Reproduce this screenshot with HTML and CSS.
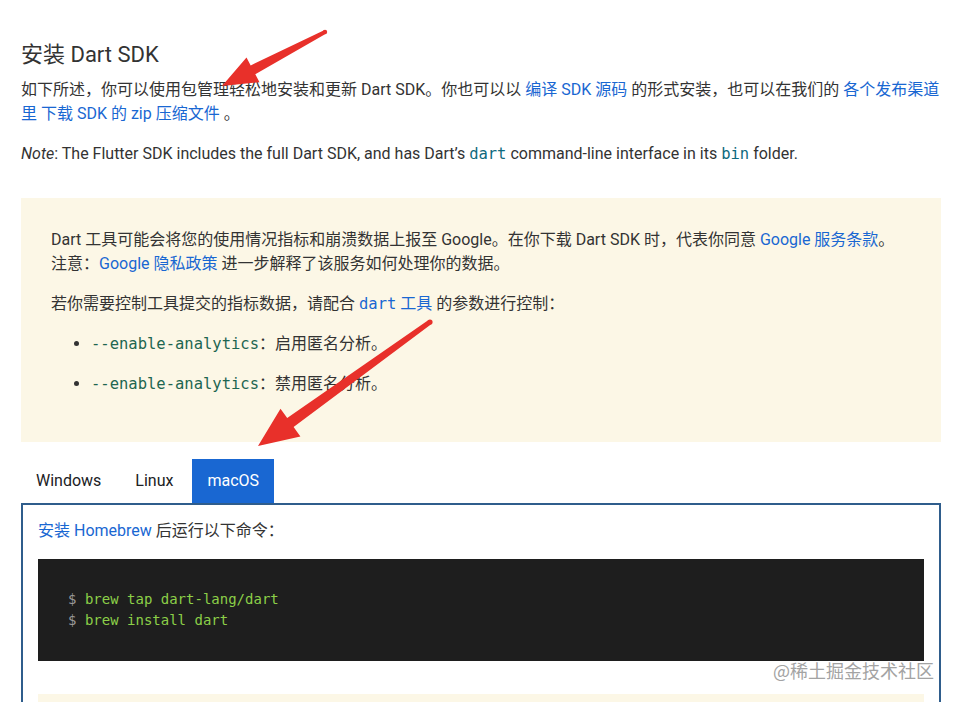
FILE: index.html
```html
<!DOCTYPE html>
<html lang="zh-CN">
<head>
<meta charset="utf-8">
<title>安装 Dart SDK</title>
<link rel="stylesheet" href="styles.css">
</head>
<body>
<main class="page">
  <h2 class="title">安装 Dart SDK</h2>
  <p class="para">如下所述，你可以使用包管理轻松地安装和更新 Dart SDK。你也可以以 <a href="#">编译 SDK 源码</a> 的形式安装，也可以在我们的 <a href="#">各个发布渠道里 下载 SDK 的 zip 压缩文件</a> 。</p>
  <p class="para"><em>Note</em>: The Flutter SDK includes the full Dart SDK, and has Dart’s <code class="inline">dart</code> command-line interface in its <code class="inline">bin</code> folder.</p>

  <aside class="notice">
    <p class="para">Dart 工具可能会将您的使用情况指标和崩溃数据上报至 Google。在你下载 Dart SDK 时，代表你同意 <a href="#">Google 服务条款</a>。<br>注意：<a href="#">Google 隐私政策</a> 进一步解释了该服务如何处理你的数据。</p>
    <p class="para">若你需要控制工具提交的指标数据，请配合 <a href="#"><code class="inline link-code">dart</code> 工具</a> 的参数进行控制：</p>
    <ul class="list">
      <li><code class="inline green">--enable-analytics</code>：启用匿名分析。</li>
      <li><code class="inline green">--enable-analytics</code>：禁用匿名分析。</li>
    </ul>
  </aside>

  <div class="tabs">
    <span class="tab">Windows</span>
    <span class="tab">Linux</span>
    <span class="tab active">macOS</span>
  </div>
  <section class="panel">
    <p class="para"><a href="#">安装 Homebrew</a> 后运行以下命令：</p>
    <pre class="code"><span class="prompt">$</span> <span class="cmd">brew tap dart-lang/dart</span>
<span class="prompt">$</span> <span class="cmd">brew install dart</span></pre>
    <div class="notice-small"></div>
  </section>
</main>

<svg class="arrows" width="953" height="702" viewBox="0 0 953 702" aria-hidden="true">
  <polygon fill="#e8302a" points="324.1,30.2 250.7,65.4 246.5,57.4 222,86 259.5,82.2 255.3,74.2 325.9,33.8"/>
  <circle cx="325" cy="32" r="2.2" fill="#e8302a"/>
  <polygon fill="#e8302a" points="428.5,320 287.2,418.1 280.5,408.8 258,446 300.4,436.4 293.6,427.1 431.5,324"/>
  <circle cx="430" cy="322" r="2.6" fill="#e8302a"/>
</svg>
<div class="watermark">@稀土掘金技术社区</div>
</body>
</html>
```

FILE: styles.css
```css
html, body {
  margin: 0;
  padding: 0;
  background: #ffffff;
  overflow: hidden;
}
body {
  width: 953px;
  height: 702px;
  position: relative;
  font-family: Roboto, "Noto Sans CJK SC", sans-serif;
  font-size: 16px;
  line-height: 24px;
  color: #333333;
}
.page {
  box-sizing: border-box;
  height: 702px;
  overflow: hidden;
  padding: 40px 12px 0 21px;
}
.title {
  margin: 0 0 8px;
  font-size: 22px;
  line-height: 30px;
  font-weight: 400;
  color: #333333;
}
.para {
  margin: 0 0 16px;
}
a {
  color: #1967d2;
  text-decoration: none;
}
em {
  font-style: italic;
}
.inline {
  font-family: "DejaVu Sans Mono", monospace;
  font-size: 15.5px;
  color: #0f6a7e;
}
.link-code {
  color: #1967d2;
}
.green {
  color: #1e6651;
}
.notice {
  margin-top: 32px;
  background: #fcf7e6;
  padding: 30px 30px 30px;
}
.list {
  margin: 0;
  padding: 0 0 0 40px;
}
.list li {
  margin-bottom: 16px;
}
.tabs {
  margin-top: 17px;
  display: flex;
  gap: 4px;
  height: 44px;
}
.tab {
  padding: 0 15px;
  line-height: 44px;
  color: #202124;
}
.tab.active {
  background: #1967d2;
  color: #ffffff;
}
.panel {
  border: 2px solid #2f5d8c;
  border-bottom: 0;
  padding: 14px 15px 0;
  height: 190px;
}
.code {
  margin: 0 0 33px;
  padding: 30px 30px;
  background: #1e1e1e;
  font-family: "DejaVu Sans Mono", monospace;
  font-size: 14px;
  line-height: 21px;
  color: #9a9a9a;
}
.prompt {
  color: #9a9a9a;
}
.cmd {
  color: #8ccf48;
}
.notice-small {
  background: #fcf7e6;
  height: 8px;
}
.arrows {
  position: absolute;
  left: 0;
  top: 0;
  pointer-events: none;
}
.watermark {
  position: absolute;
  left: 773px;
  top: 657px;
  font-size: 18px;
  line-height: 26px;
  color: #a3a3a3;
  font-family: "Noto Sans CJK SC", sans-serif;
  text-shadow: 0 0 2px #ffffff;
}
```
